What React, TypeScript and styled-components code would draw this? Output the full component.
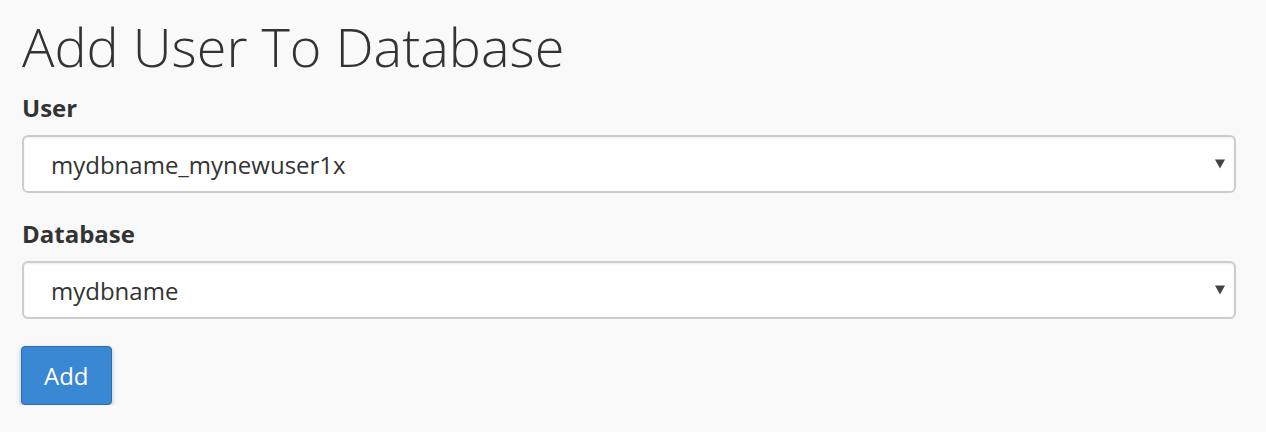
import React from 'react';
import styled, { createGlobalStyle } from 'styled-components';

const GlobalStyle = createGlobalStyle`
  html, body {
    margin: 0;
    padding: 0;
    background: #f9f9f9;
    font-family: "Open Sans", "Noto Sans", sans-serif;
    color: #333;
  }
`;

const Page = styled.div`
  padding: 16px 30px 0 22px;
`;

const Title = styled.h1`
  margin: 0 0 18px;
  font-size: 54px;
  font-weight: 300;
  line-height: 60px;
  color: #333;
`;

const Field = styled.div`
  margin-bottom: 27px;
`;

const Label = styled.label`
  display: block;
  font-size: 24px;
  font-weight: 700;
  line-height: 28px;
  margin-bottom: 13px;
`;

const SelectWrap = styled.div`
  position: relative;
`;

const Select = styled.select`
  appearance: none;
  display: block;
  width: 100%;
  height: 58px;
  padding: 0 40px 0 27px;
  font-family: inherit;
  font-size: 24px;
  color: #333;
  background: #fff;
  border: 2px solid #ccc;
  border-radius: 6px;
  box-shadow: inset 0 1px 2px rgba(0, 0, 0, 0.08);
  outline: none;
`;

const Caret = styled.span`
  position: absolute;
  right: 11px;
  top: 50%;
  transform: translateY(-50%);
  width: 0;
  height: 0;
  border-left: 5px solid transparent;
  border-right: 5px solid transparent;
  border-top: 9px solid #444;
  pointer-events: none;
`;

const Button = styled.button`
  display: block;
  margin-left: -1px;
  height: 59px;
  padding: 0 22px;
  font-family: inherit;
  font-size: 24px;
  color: #fff;
  background: #3a87d4;
  border: 1px solid #2a6db3;
  border-radius: 4px;
  box-shadow: 0 2px 5px rgba(0, 0, 0, 0.25);
  cursor: pointer;
`;

export default function App() {
  return (
    <>
      <GlobalStyle />
      <Page>
        <Title>Add User To Database</Title>
        <Field>
          <Label>User</Label>
          <SelectWrap>
            <Select defaultValue="mydbname_mynewuser1x">
              <option>mydbname_mynewuser1x</option>
            </Select>
            <Caret />
          </SelectWrap>
        </Field>
        <Field>
          <Label>Database</Label>
          <SelectWrap>
            <Select defaultValue="mydbname">
              <option>mydbname</option>
            </Select>
            <Caret />
          </SelectWrap>
        </Field>
        <Button>Add</Button>
      </Page>
    </>
  );
}
